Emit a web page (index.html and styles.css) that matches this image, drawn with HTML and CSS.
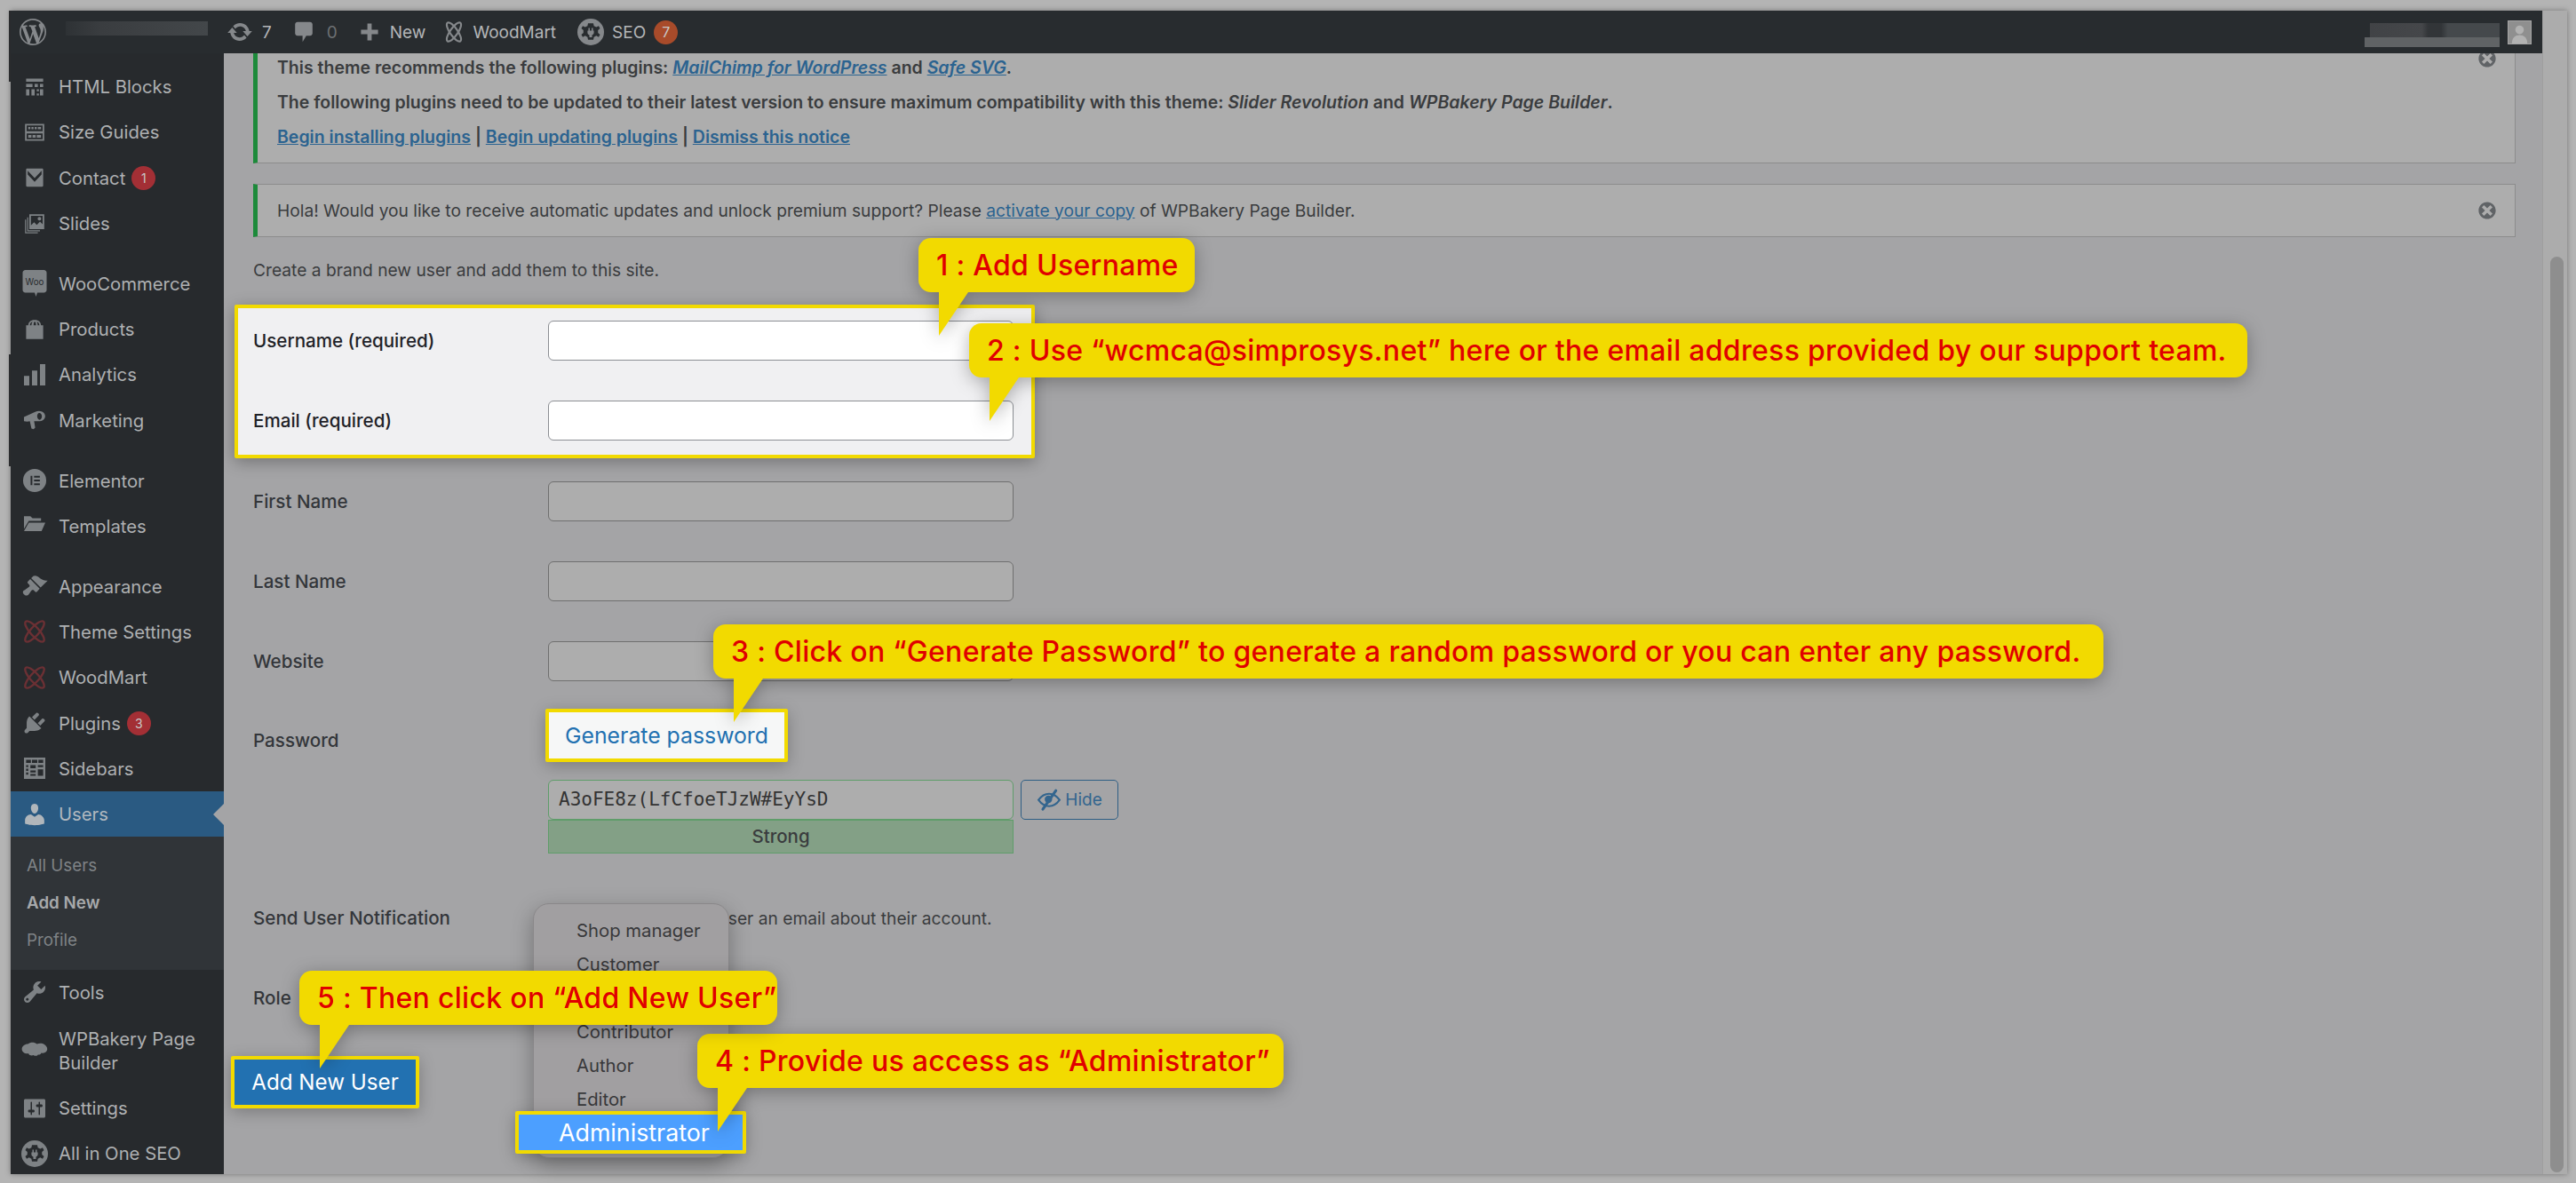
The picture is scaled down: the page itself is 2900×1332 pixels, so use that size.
FILE: index.html
```html
<!DOCTYPE html>
<html lang="en">
<head>
  <meta charset="UTF-8">
  <title>Add New User</title>
  <link rel="stylesheet" href="styles.css">
</head>
<body>
  <div class="window">
    <div class="wp">
      <header class="adminbar">
        <svg class="bar-logo" viewBox="0 0 20 20"><path d="M20 10c0-5.51-4.49-10-10-10C4.48 0 0 4.49 0 10c0 5.52 4.48 10 10 10 5.51 0 10-4.48 10-10zM7.78 15.37L4.37 6.22c.55-.02 1.17-.08 1.17-.08.5-.06.44-1.13-.06-1.11 0 0-1.45.11-2.37.11-.18 0-.37 0-.58-.01C4.12 2.69 6.87 1.11 10 1.11c2.33 0 4.45.87 6.05 2.34-.68-.11-1.65.39-1.65 1.58 0 .74.45 1.36.9 2.1.35.61.55 1.36.55 2.46 0 1.49-1.4 5-1.4 5l-3.03-8.37c.54-.02.82-.17.82-.17.5-.05.44-1.25-.06-1.22 0 0-1.44.12-2.38.12-.87 0-2.33-.12-2.33-.12-.5-.03-.56 1.2-.06 1.22l.92.08 1.26 3.41zM17.41 10c.24-.64.74-1.87.43-4.25.7 1.29 1.05 2.71 1.05 4.25 0 3.29-1.73 6.24-4.4 7.78.97-2.59 1.94-5.21 2.92-7.78zM6.1 18.09C3.12 16.65 1.11 13.53 1.11 10c0-1.3.23-2.48.72-3.59C3.25 10.3 4.67 14.2 6.1 18.09zm4.03-6.63l2.58 6.98c-.86.29-1.76.45-2.71.45-.79 0-1.57-.11-2.29-.33.81-2.38 1.62-4.74 2.42-7.1z"/></svg>
        <div class="blur-name"></div>
        <div class="bar-item updates">
          <svg viewBox="0 0 20 20"><path d="M10.2 3.28c3.53 0 6.43 2.61 6.92 6h2.08l-3.5 4-3.5-4h2.32c-.45-1.97-2.21-3.45-4.32-3.45-1.45 0-2.73.71-3.54 1.78L4.95 5.66C6.23 4.2 8.11 3.28 10.2 3.28zm-.4 13.44c-3.52 0-6.43-2.61-6.92-6H.8l3.5-4c1.17 1.33 2.33 2.67 3.5 4H5.48c.45 1.97 2.21 3.45 4.32 3.45 1.45 0 2.73-.71 3.54-1.78l1.71 1.95c-1.28 1.46-3.15 2.38-5.25 2.38z"/></svg>
          <span>7</span>
        </div>
        <div class="bar-item comments">
          <svg viewBox="0 0 20 20"><path d="M5 2h10c1.1 0 2 .9 2 2v7c0 1.1-.9 2-2 2h-3l-3 5v-5H5c-1.1 0-2-.9-2-2V4c0-1.1.9-2 2-2z"/></svg>
          <span class="muted">0</span>
        </div>
        <div class="bar-item add-new">
          <svg viewBox="0 0 20 20"><path d="M8 2h4v6h6v4h-6v6H8v-6H2V8h6z"/></svg>
          <span>New</span>
        </div>
        <div class="bar-item wood">
          <svg viewBox="0 0 20 20" class="wm-icon"><ellipse cx="10" cy="10" rx="3.6" ry="10.5" transform="rotate(35 10 10)"/><ellipse cx="10" cy="10" rx="3.6" ry="10.5" transform="rotate(-35 10 10)"/></svg>
          <span>WoodMart</span>
        </div>
        <div class="bar-item seo">
          <svg viewBox="0 0 20 20"><circle cx="10" cy="10" r="10"/><path class="seo-hole" d="M8 3.5h4l.4 2 1.8.9 1.8-.9 1 1.8-1.5 1.4v1.9l1.5 1.4-1 1.8-1.8-.9-1.8.9-.4 2H8l-.4-2-1.8-.9-1.8.9-1-1.8 1.5-1.4V8.700L3 7.300l1-1.800 1.800.9 1.800-.9z"/><path d="M8.300 7h1v2h1.400V7h1v2h.7v1.500c0 1-.6 1.600-1.400 1.800V14H9v-1.700c-.8-.2-1.400-.8-1.400-1.800V9h.7z"/></svg>
          <span>SEO</span>
          <span class="bar-badge">7</span>
        </div>
        <div class="bar-user">
          <div class="blur-user">
            <div class="blur-top"></div>
            <div class="blur-bottom"></div>
          </div>
          <div class="avatar">
            <svg viewBox="0 0 26 26"><circle cx="13" cy="10" r="5"/><path d="M4 26c0-7 4-10 9-10s9 3 9 10z"/></svg>
          </div>
        </div>
      </header>

      <div class="wp-body">
        <nav class="sidebar">
          <a class="menu-item">
            <svg class="menu-icon" viewBox="0 0 20 20"><path d="M2 2h16v3H2zM2 7h6v3H2zM10 7h3v3h-3zM15 7h3v3h-3zM2 12h3v6H2zM7 12h3v6H7zM12 12h2v2h-2zM15 12h3v6h-3zM12 16h2v2h-2z"/></svg>
            <span>HTML Blocks</span>
          </a>
          <a class="menu-item">
            <svg class="menu-icon" viewBox="0 0 20 20"><path fill-rule="evenodd" d="M1 2h18v16H1zM2.500 3.500v5.500h15V3.500zM2.500 11v5.500h15V11zM4 5h2v2H4zM7 5h2v2H7zM10 5h2v2h-2zM13 5h3v2h-3zM4 12.500h3v2.500H4zM8 12.500h3v2.500H8zM12 12.500h4v2.500h-4z"/></svg>
            <span>Size Guides</span>
          </a>
          <a class="menu-item">
            <svg class="menu-icon" viewBox="0 0 20 20"><path fill-rule="evenodd" d="M3 1.500h14c.6 0 1 .4 1 1v15c0 .6-.4 1-1 1H3c-.6 0-1-.4-1-1v-15c0-.6.4-1 1-1zM3.500 3.500l6.500 7 6.500-7v3.500L10 14 3.500 7z"/></svg>
            <span>Contact</span>
            <span class="count">1</span>
          </a>
          <a class="menu-item">
            <svg class="menu-icon" viewBox="0 0 20 20"><path fill-rule="evenodd" d="M5 1h14v14H5zM6.500 2.500v9l3-3 2.500 2.500 3-3 2.500 2.500v-8zM14.500 3.500a1.700 1.700 0 1 1 0 3.400 1.700 1.700 0 0 1 0-3.400zM3 4h1v12h11v1H3zM1 6h1v12h11v1H1z"/></svg>
            <span>Slides</span>
          </a>

          <a class="menu-item gap">
            <svg class="menu-icon dash" viewBox="0 0 20 20"><path d="M3 0h14c1.100 0 2 .9 2 2v13c0 1.100-.9 2-2 2h-5l-1 3-1-3H3c-1.100 0-2-.9-2-2V2c0-1.100.9-2 2-2z"/><text class="woo-text" x="10" y="11" text-anchor="middle">Woo</text></svg>
            <span>WooCommerce</span>
          </a>
          <a class="menu-item">
            <svg class="menu-icon" viewBox="0 0 20 20"><path fill-rule="evenodd" d="M2 6h2c.3-3 2-5 6-5s5.700 2 6 5h2v13H2zM5.500 6H7c.2-2 .8-3 1.500-3.200C7 3 5.700 4 5.500 6zM9 6h2.300c-.1-2-.5-3.300-1.200-3.300S9.100 4 9 6zM12.900 6h1.600c-.2-2-1.500-3-3-3.200.7.2 1.300 1.200 1.400 3.200z"/></svg>
            <span>Products</span>
          </a>
          <a class="menu-item">
            <svg class="menu-icon" viewBox="0 0 20 20"><path d="M0 11h5v9H0zM7.500 6h5v14h-5zM15 0h5v20h-5z"/></svg>
            <span>Analytics</span>
          </a>
          <a class="menu-item">
            <svg class="menu-icon" viewBox="0 0 20 20"><path fill-rule="evenodd" d="M0 7l11-5c2-.8 4-.8 6 0 2.500 1.200 3.200 3.500 2.700 5.500-.5 2-2 3-4.700 3.500L9.500 11l1 6-1.500 1.500L7 18l-1.500-7L3 11.500 0 11zM13.500 3.500c-1 .8-1.300 2.300-1 3.700s1.200 2.400 2.300 2.500c1.200-.2 2-1.500 2-3.200s-1-3-2-3.200c-.5 0-.9 0-1.300.2z"/></svg>
            <span>Marketing</span>
          </a>

          <a class="menu-item gap">
            <svg class="menu-icon dash" viewBox="-1.500 -1.500 23 23"><path fill-rule="evenodd" d="M10 0a10 10 0 1 1 0 20 10 10 0 0 1 0-20zM6.500 6v8H8V6zM9.500 6v1.500h5V6zM9.500 9.200v1.600h5V9.200zM9.500 12.500V14h5v-1.500z"/></svg>
            <span>Elementor</span>
          </a>
          <a class="menu-item">
            <svg class="menu-icon" viewBox="0 0 20 20"><path d="M0 1h6l2 2h8v2.500H4.500L0 13zM4.500 7H20l-3.500 8H0z"/></svg>
            <span>Templates</span>
          </a>

          <a class="menu-item gap">
            <svg class="menu-icon dash" viewBox="0 0 20 20"><path d="M14.480 11.060L7.410 3.990l1.500-1.500c.5-.56 2.300-.47 3.510.32 1.210.8 1.430 1.280 2.910 2.100 1.180.64 2.450 1.260 4.450.85zm-.71.71L6.700 4.700 4.930 6.470c-.39.39-.39 1.020 0 1.410l1.060 1.060c.39.39.39 1.030 0 1.420-.6.6-1.430 1.110-2.210 1.690-.35.26-.7.53-1.010.84C1.430 13.260 1 14.190 1.250 15c.25.8 1.190 1.750 2 2 .8.25 1.740-.18 2.110-.71.31-.31.58-.66.84-1.010.58-.78 1.090-1.610 1.690-2.210.39-.39 1.030-.39 1.420 0l1.060 1.060c.39.39 1.020.39 1.410 0z"/></svg>
            <span>Appearance</span>
          </a>
          <a class="menu-item">
            <svg class="menu-icon dash wm-red" viewBox="-1 -1 22 22"><ellipse cx="10" cy="10" rx="3.600" ry="11" transform="rotate(42 10 10)"/><ellipse cx="10" cy="10" rx="3.600" ry="11" transform="rotate(-42 10 10)"/></svg>
            <span>Theme Settings</span>
          </a>
          <a class="menu-item">
            <svg class="menu-icon dash wm-red" viewBox="-1 -1 22 22"><ellipse cx="10" cy="10" rx="3.600" ry="11" transform="rotate(42 10 10)"/><ellipse cx="10" cy="10" rx="3.600" ry="11" transform="rotate(-42 10 10)"/></svg>
            <span>WoodMart</span>
          </a>
          <a class="menu-item">
            <svg class="menu-icon dash" viewBox="0 0 20 20"><path d="M13.110 4.360L9.870 7.600 8 5.730l3.240-3.240c.35-.34 1.050-.2 1.560.32.52.51.66 1.210.31 1.550zm-8 1.770l.91-1.120 9.010 9.010-1.190.84c-.71.71-2.630 1.160-3.820 1.160H6.140L4.900 17.260c-.59.59-1.540.59-2.120 0-.59-.58-.59-1.530 0-2.120l1.240-1.240v-3.880c0-1.130.4-3.190 1.090-3.890zm7.260 3.970l3.240-3.240c.34-.35 1.040-.21 1.550.31.52.51.66 1.210.31 1.550l-3.240 3.250z"/></svg>
            <span>Plugins</span>
            <span class="count">3</span>
          </a>
          <a class="menu-item">
            <svg class="menu-icon" viewBox="0 0 20 20"><path fill-rule="evenodd" d="M0 0h20v20H0zM2 2v3h4.500V2zM7.500 2v3h5V2zM13.500 2v3H18V2zM2 7v2h2V7zM6 7v3h5V7zM13 7v2h5V7zM2 10.500v2h2v-2zM13 11v6h5v-6zM2 14v2h2v-2zM6 12v2h5v-2zM6 15.500v1.500h5v-1.500z"/></svg>
            <span>Sidebars</span>
          </a>
          <a class="menu-item current">
            <svg class="menu-icon dash" viewBox="0 0 20 20"><path d="M10 9.250c-2.270 0-2.730-3.440-2.730-3.440C7 4.020 7.820 2 9.970 2c2.160 0 2.980 2.020 2.710 3.810 0 0-.41 3.440-2.680 3.440zm0 2.570L12.720 10c2.390 0 4.520 2.330 4.520 4.530v2.490s-3.650 1.130-7.240 1.130c-3.650 0-7.240-1.130-7.240-1.130v-2.490c0-2.250 1.940-4.480 4.470-4.480z"/></svg>
            <span>Users</span>
          </a>
          <div class="submenu">
            <a>All Users</a>
            <a class="on">Add New</a>
            <a>Profile</a>
          </div>
          <a class="menu-item">
            <svg class="menu-icon dash" viewBox="0 0 20 20"><path d="M16.680 9.770c-1.340 1.340-3.300 1.670-4.950.99l-5.410 6.520c-.99.99-2.590.99-3.580 0s-.99-2.590 0-3.570l6.520-5.420c-.68-1.650-.35-3.610.99-4.950 1.280-1.280 3.120-1.620 4.720-1.060l-2.890 2.890 2.820 2.820 2.860-2.870c.53 1.580.18 3.390-1.080 4.670zM3.810 16.210c.4.39 1.040.39 1.430 0 .4-.4.4-1.040 0-1.430-.39-.4-1.030-.4-1.430 0-.39.39-.39 1.030 0 1.430z"/></svg>
            <span>Tools</span>
          </a>
          <a class="menu-item tall">
            <svg class="menu-icon bakery" viewBox="0 0 24 16"><path d="M6 2c2-2 6-2 8 0 2-1 5-1 7 .5 2 1.500 3 3.500 2 5.500-1 1.800-3 2.500-5 2-.5 1.500-2 2-3 1.500-1 1.500-3 1.500-4 .5-2 .8-4 0-4.500-1.500C3 11 .5 9 .5 6.500S3 2 6 2z"/></svg>
            <span>WPBakery Page Builder</span>
          </a>
          <a class="menu-item">
            <svg class="menu-icon dash" viewBox="0 0 20 20"><path d="M18 16V4c0-.55-.45-1-1-1H3c-.55 0-1 .45-1 1v12c0 .55.45 1 1 1h14c.55 0 1-.45 1-1zM8 11h1c.55 0 1 .45 1 1s-.45 1-1 1H8v1.500c0 .28-.22.5-.5.5s-.5-.22-.5-.5V13H6c-.55 0-1-.45-1-1s.45-1 1-1h1V5.500c0-.28.22-.5.5-.5s.5.22.5.5V11zm5-2h-1c-.55 0-1-.45-1-1s.45-1 1-1h1V5.500c0-.28.22-.5.5-.5s.5.22.5.5V7h1c.55 0 1 .45 1 1s-.45 1-1 1h-1v5.500c0 .28-.22.5-.5.5s-.5-.22-.5-.5V9z"/></svg>
            <span>Settings</span>
          </a>
          <a class="menu-item">
            <svg class="menu-icon dash" viewBox="0 0 20 20"><path d="M10 0a10 10 0 1 1 0 20 10 10 0 0 1 0-20z"/><path class="seo-hole-dark" d="M8 3.500h4l.4 2 1.800.9 1.800-.9 1 1.800-1.500 1.400v1.900l1.500 1.400-1 1.800-1.800-.9-1.800.9-.4 2H8l-.4-2-1.800-.9-1.800.9-1-1.800 1.500-1.400V8.700L3 7.300l1-1.800 1.800.9 1.800-.9z"/><path d="M8.300 7h1v2h1.400V7h1v2h.7v1.500c0 1-.6 1.600-1.400 1.800V14H9v-1.700c-.8-.2-1.400-.8-1.400-1.800V9h.7z"/></svg>
            <span>All in One SEO</span>
          </a>
        </nav>

        <main class="content">
          <div class="notice first">
            <p><b>This theme recommends the following plugins: <a><i>MailChimp for WordPress</i></a> and <a><i>Safe SVG</i></a>.</b></p>
            <p><b>The following plugins need to be updated to their latest version to ensure maximum compatibility with this theme: <i>Slider Revolution</i> and <i>WPBakery Page Builder</i>.</b></p>
            <p><b><a>Begin installing plugins</a> | <a>Begin updating plugins</a> | <a>Dismiss this notice</a></b></p>
            <svg class="dismiss clipped" viewBox="0 0 20 20"><path d="M10 2c4.420 0 8 3.580 8 8s-3.580 8-8 8-8-3.580-8-8 3.580-8 8-8zm5 11l-3-3 3-3-2-2-3 3-3-3-2 2 3 3-3 3 2 2 3-3 3 3z"/></svg>
          </div>
          <div class="notice second">
            <p>Hola! Would you like to receive automatic updates and unlock premium support? Please <a>activate your copy</a> of WPBakery Page Builder.</p>
            <svg class="dismiss" viewBox="0 0 20 20"><path d="M10 2c4.420 0 8 3.580 8 8s-3.580 8-8 8-8-3.580-8-8 3.580-8 8-8zm5 11l-3-3 3-3-2-2-3 3-3-3-2 2 3 3-3 3 2 2 3-3 3 3z"/></svg>
          </div>
          <p class="intro">Create a brand new user and add them to this site.</p>

          <div class="required-box">
            <div class="row">
              <label class="bright">Username (required)</label>
              <div class="field white"></div>
            </div>
            <div class="row">
              <label class="bright">Email (required)</label>
              <div class="field white"></div>
            </div>
          </div>

          <div class="row">
            <label>First Name</label>
            <div class="field"></div>
          </div>
          <div class="row">
            <label>Last Name</label>
            <div class="field"></div>
          </div>
          <div class="row">
            <label>Website</label>
            <div class="field"></div>
          </div>

          <div class="row password">
            <label>Password</label>
            <div class="pw-col">
              <button class="generate">Generate password</button>
              <div class="pw-line">
                <div class="pw-wrap">
                  <div class="field pw-field">A3oFE8z(LfCfoeTJzW#EyYsD</div>
                  <div class="meter">Strong</div>
                </div>
                <button class="hide-btn">
                  <svg viewBox="0 0 20 20"><path fill="none" stroke="currentColor" stroke-width="1.500" d="M1.500 10.500C4 7 7 5.500 10 5.500s6 1.500 8.500 5c-2.500 3.500-5.500 5-8.500 5s-6-1.500-8.500-5z"/><circle cx="9.500" cy="10" r="3" fill="currentColor"/><path fill="none" stroke="currentColor" stroke-width="2.200" stroke-linecap="round" d="M15.500 3L5 18"/></svg>
                  <span>Hide</span>
                </button>
              </div>
            </div>
          </div>

          <div class="row notify">
            <label>Send User Notification</label>
            <div class="notify-text">Send the new user an email about their account.</div>
          </div>
          <div class="row role">
            <label>Role</label>
          </div>
          <button class="submit">Add New User</button>
        </main>
      </div>
    </div>
    <div class="scrollbar"><div class="thumb"></div></div>
  </div>

  <div class="role-menu">
    <div>Shop manager</div>
    <div>Customer</div>
    <div>&nbsp;</div>
    <div>Contributor</div>
    <div>Author</div>
    <div>Editor</div>
  </div>
  <div class="role-admin">Administrator</div>

  <div class="callout c1">1 : Add Username</div>
  <div class="callout c2">2 : Use “wcmca@simprosys.net” here or the email address provided by our support team.</div>
  <div class="callout c3">3 : Click on “Generate Password” to generate a random password or you can enter any password.</div>
  <div class="callout c4">4 : Provide us access as “Administrator”</div>
  <div class="callout c5">5 : Then click on “Add New User”</div>
</body>
</html>
```

FILE: styles.css
```css
:root {
  --yellow: #f2da00;
  --red: #e00000;
  --dark: #272a2d;
  --page: #a4a4a6;
  --panel: #adadad;
  --text: #3a3c3e;
  --link: #2b6390;
  --menu-text: #aeb0b2;
  --menu-icon: #7e8285;
}

* {
  box-sizing: border-box;
  margin: 0;
  padding: 0;
}

body {
  position: relative;
  width: 2900px;
  height: 1332px;
  overflow: hidden;
  background: #b4b4b4;
  font-family: Inter, "Liberation Sans", sans-serif;
  font-size: 19.2px;
  color: var(--text);
}

.window {
  position: relative;
  display: flex;
  width: 2878px;
  height: 1310px;
  margin: 12px 0 0 12px;
  box-shadow: 0 0 6px rgba(0, 0, 0, 0.35);
}

/* thin dark slivers left of the sidebar */
.window::before,
.window::after {
  content: "";
  position: absolute;
  left: -2px;
  width: 2px;
  background: #2a2b2d;
}

.window::before {
  top: 0;
  height: 80px;
}

.window::after {
  top: 387px;
  height: 126px;
}

.wp {
  display: flex;
  flex-direction: column;
  flex: 1;
  min-width: 0;
}

/* top bar */
.adminbar {
  position: relative;
  z-index: 1;
  display: flex;
  align-items: center;
  flex: none;
  height: 48px;
  background: #282c2f;
  color: #b4b6b8;
  font-size: 19px;
}

.bar-logo {
  width: 30px;
  height: 30px;
  margin-left: 10px;
  fill: #85888b;
}

.blur-name {
  width: 160px;
  height: 16px;
  margin: -8px 0 0 22px;
  background: linear-gradient(to right, #2e3235, #3a3d40 25%, #43474a);
}

.bar-item {
  display: flex;
  align-items: center;
}

.bar-item svg {
  fill: #85888b;
}

.updates {
  margin-left: 21px;
  gap: 10px;
}

.updates svg {
  width: 30px;
  height: 30px;
}

.comments {
  margin-left: 22px;
  gap: 12px;
}

.comments svg {
  width: 28px;
  height: 28px;
}

.muted {
  color: #6d7073;
}

.add-new {
  margin-left: 24px;
  gap: 11px;
}

.add-new svg {
  width: 24px;
  height: 24px;
}

.wood {
  margin-left: 20px;
  gap: 9px;
}

.wood svg {
  width: 24px;
  height: 30px;
}

.wm-icon ellipse {
  fill: none;
  stroke: #85888b;
  stroke-width: 1.8;
}

.seo {
  margin-left: 24px;
  gap: 9px;
}

.seo svg {
  width: 30px;
  height: 30px;
}

.seo-hole {
  fill: #282c2f;
}

.seo-hole-dark {
  fill: #272a2d;
}

.bar-badge {
  display: flex;
  align-items: center;
  justify-content: center;
  width: 27px;
  height: 27px;
  border-radius: 50%;
  background: #a84b2a;
  color: #c9c9c9;
  font-size: 16px;
}

.bar-user {
  display: flex;
  align-items: center;
  margin-left: auto;
  margin-right: 12px;
  gap: 9px;
}

.blur-user {
  display: flex;
  flex-direction: column;
  align-items: flex-end;
  width: 152px;
  margin-top: 6px;
}

.blur-top {
  width: 146px;
  height: 16px;
  background: linear-gradient(to right, #414346, #45474a 40%, #323538 45%, #323538 55%, #45494c 60%);
}

.blur-bottom {
  width: 152px;
  height: 11px;
  background: #606365;
}

.avatar {
  width: 27px;
  height: 27px;
  background: #8f8f8f;
  border: 1px solid #a5a5a5;
  overflow: hidden;
}

.avatar svg {
  display: block;
  width: 100%;
  height: 100%;
  fill: #b2b2b2;
}

/* sidebar */
.wp-body {
  display: flex;
  flex: 1;
  min-height: 0;
}

.sidebar {
  flex: none;
  width: 240px;
  padding-top: 12px;
  background: var(--dark);
  overflow: hidden;
  font-size: 20.3px;
  color: var(--menu-text);
}

.menu-item {
  position: relative;
  display: flex;
  align-items: center;
  height: 51.3px;
  padding-left: 15px;
}

.menu-item.gap {
  margin-top: 16.5px;
}

.menu-item.tall {
  height: 79px;
  line-height: 27px;
}

.menu-item > span:first-of-type {
  margin-left: 15px;
}

.menu-item.tall > span {
  width: 175px;
}

.menu-icon {
  flex: none;
  width: 24px;
  height: 24px;
  fill: var(--menu-icon);
}

.menu-icon.dash {
  width: 30px;
  height: 30px;
  margin: 0 -3px;
}

.menu-icon.bakery {
  width: 30px;
  height: 20px;
  margin: 0 -3px;
}

.wm-red ellipse {
  fill: none;
  stroke: #6b3034;
  stroke-width: 1.8;
}

.woo-text {
  fill: var(--dark);
  font-size: 6.5px;
  font-family: Inter, sans-serif;
}

.count {
  display: flex;
  align-items: center;
  justify-content: center;
  width: 27px;
  height: 27px;
  margin-left: 7px;
  border-radius: 50%;
  background: #a32f35;
  color: #c8c8c8;
  font-size: 14px;
}

.current {
  background: #2a5a82;
  color: #b0b8bf;
}

.current .menu-icon {
  fill: #b0b6bb;
}

.current::after {
  content: "";
  position: absolute;
  right: 0;
  top: 50%;
  margin-top: -12px;
  border: 12px solid transparent;
  border-right-color: var(--page);
  border-left-width: 0;
}

.submenu {
  display: flex;
  flex-direction: column;
  justify-content: center;
  height: 149.5px;
  padding-left: 18px;
  background: #303438;
  color: #7f8386;
  font-size: 18.8px;
}

.submenu a {
  height: 42px;
  line-height: 42px;
}

.submenu .on {
  font-weight: 600;
  color: #a7a9ab;
}

/* content */
.content {
  flex: 1;
  min-width: 0;
  padding: 0 30px 0 33px;
  background: var(--page);
  overflow: hidden;
  line-height: 39px;
}

.notice {
  position: relative;
  background: var(--panel);
  border: 1.5px solid #8c8c8c;
  border-left: 5px solid #1c8a3a;
  padding-left: 22px;
}

.notice b {
  font-size: 19.5px;
  font-weight: 600;
}

.notice a {
  color: var(--link);
  text-decoration: underline;
}

.first {
  display: flow-root;
  height: 124px;
  border-top: none;
}

.first p:first-child {
  margin-top: -3px;
}

.second {
  display: flex;
  align-items: center;
  height: 60px;
  margin-top: 23px;
}

.dismiss {
  position: absolute;
  right: 19px;
  top: 50%;
  width: 24px;
  height: 24px;
  margin-top: -12px;
  fill: #606366;
}

.dismiss.clipped {
  top: -6px;
  margin-top: 0;
}

.intro {
  margin-top: 18px;
  line-height: 39px;
}

.required-box {
  width: 901px;
  height: 173px;
  margin: 19px 0 0 -21px;
  padding: 14px 0 0 17px;
  background: #f0f0f2;
  border: 4px solid var(--yellow);
  border-radius: 2px;
  box-shadow: 0 4px 18px rgba(0, 0, 0, 0.3);
}

.row {
  display: flex;
  align-items: center;
  height: 90.2px;
  padding-bottom: 46px;
}

.required-box + .row {
  margin-top: 26px;
}

.row label {
  flex: none;
  width: 332px;
  padding-top: 1px;
  font-size: 20.6px;
  font-weight: 500;
  color: #33363a;
}

.row label.bright {
  color: #1f2227;
}

.field {
  width: 524px;
  height: 45px;
  background: var(--panel);
  border: 1.5px solid #6f6f6f;
  border-radius: 6px;
}

.field.white {
  background: #fff;
  border-color: #8c8f94;
}

.password {
  align-items: flex-start;
  height: auto;
  padding: 0;
  margin-top: -15px;
}

.password label {
  margin-top: 15px;
}

.pw-col {
  display: flex;
  flex-direction: column;
  margin-left: -3px;
}

.generate {
  width: 273px;
  height: 60px;
  background: #f6f7f7;
  border: 4px solid var(--yellow);
  border-radius: 2px;
  color: #2271b1;
  font: 24.8px Inter, sans-serif;
  box-shadow: 0 4px 18px rgba(0, 0, 0, 0.25);
}

.pw-line {
  display: flex;
  gap: 8px;
  margin: 20px 0 0 3px;
}

.pw-field {
  height: 45px;
  padding-left: 11px;
  border-color: #5f9d6a;
  font-family: "DejaVu Sans Mono", monospace;
  font-size: 21px;
  line-height: 42px;
  color: #333;
}

.meter {
  width: 524px;
  height: 38px;
  background: #83a086;
  border: 1px solid #5f9d6a;
  text-align: center;
  font-size: 20.5px;
  font-weight: 500;
  line-height: 36px;
}

.hide-btn {
  display: flex;
  align-items: center;
  justify-content: center;
  gap: 4px;
  width: 110px;
  height: 45px;
  background: transparent;
  border: 1.5px solid #2f5f85;
  border-radius: 5px;
  color: #33658e;
  font: 19px Inter, sans-serif;
}

.hide-btn svg {
  width: 28px;
  height: 28px;
}

.notify {
  height: 90px;
  padding: 0;
  margin-top: 27px;
}

.notify-text {
  padding-left: 62px;
  margin-top: 3px;
  white-space: nowrap;
}

.role {
  height: 90px;
  padding: 0;
}

.submit {
  display: block;
  width: 212px;
  height: 59px;
  margin: 21px 0 0 -25px;
  background: #2271b1;
  border: 4px solid var(--yellow);
  border-radius: 2px;
  color: #fff;
  font: 24.2px Inter, sans-serif;
  box-shadow: 0 4px 18px rgba(0, 0, 0, 0.25);
}

.scrollbar {
  flex: none;
  width: 28px;
  padding: 277px 4px 2px 8px;
  background: #acacac;
  border-left: 1px solid #9e9e9e;
}

.thumb {
  height: 100%;
  background: #8e8e8e;
  border-radius: 8px;
}

/* open role dropdown */
.role-menu {
  position: absolute;
  left: 600px;
  top: 1017px;
  width: 221px;
  height: 287px;
  padding: 11px 0 0 48px;
  background: #a19fa1;
  border: 1px solid #8a888a;
  border-radius: 18px;
  box-shadow: 0 8px 24px rgba(0, 0, 0, 0.3);
  font-size: 20.3px;
  line-height: 38px;
  color: #38383a;
}

.role-admin {
  position: absolute;
  left: 580px;
  top: 1251px;
  width: 260px;
  height: 48px;
  padding-left: 45px;
  background: #4c9fff;
  border: 4px solid var(--yellow);
  border-radius: 2px;
  color: #fff;
  font-size: 26.8px;
  line-height: 40px;
  box-shadow: 0 4px 18px rgba(0, 0, 0, 0.25);
}

/* yellow callouts */
.callout {
  position: absolute;
  height: 61px;
  padding-left: 20px;
  background: var(--yellow);
  border-radius: 14px;
  color: var(--red);
  font-size: 32px;
  font-weight: 500;
  letter-spacing: 0.3px;
  line-height: 61px;
  white-space: nowrap;
  filter: drop-shadow(0 4px 10px rgba(0, 0, 0, 0.3));
}

.callout::after {
  content: "";
  position: absolute;
  left: 23px;
  top: 100%;
  width: 33px;
  height: 49px;
  background: var(--yellow);
  clip-path: polygon(0 0, 100% 0, 0 100%);
}

.c1 {
  left: 1034px;
  top: 268px;
  width: 311px;
}

.c2 {
  left: 1091px;
  top: 364px;
  width: 1439px;
}

.c3 {
  left: 803px;
  top: 703px;
  width: 1565px;
}

.c4 {
  left: 785px;
  top: 1164px;
  width: 660px;
}

.c5 {
  left: 337px;
  top: 1093px;
  width: 538px;
}
```
